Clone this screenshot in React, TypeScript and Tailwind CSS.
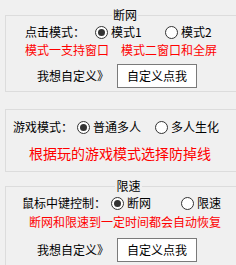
import React from "react";

// Small Win10-style radio button
function Radio({ checked, label, width }: { checked: boolean; label: string; width: string }) {
  return (
    <label className={`flex items-center ${width}`}>
      <span className="flex h-[13px] w-[13px] items-center justify-center rounded-full border border-[#333333] bg-white">
        {checked && <span className="h-[7px] w-[7px] rounded-full bg-[#333333]" />}
      </span>
      <span className="ml-[3px]">{label}</span>
    </label>
  );
}

function CustomRow({ pad }: { pad: string }) {
  return (
    <div className={`flex items-center ${pad}`}>
      <span className="w-[80px]">我想自定义》</span>
      <button className="flex h-[24px] w-[80px] items-center justify-center border border-[#7a7a7a] bg-white leading-[16px]">
        自定义点我
      </button>
    </div>
  );
}

export default function App() {
  return (
    <div
      className="h-[265px] w-[236px] overflow-hidden bg-[#f0f0f0] text-[12px] leading-[16px] text-black"
      style={{ fontFamily: '"Noto Sans CJK SC", "Noto Sans", sans-serif' }}
    >
      {/* 断网 */}
      <fieldset className="ml-[5px] mt-[7px] w-[240px] border border-[#dcdcdc] pb-[3px]">
        <legend className="mx-auto px-[1px] leading-[16px]">断网</legend>
        <div className="mt-[1px] flex h-[16px] items-center pl-[19px]">
          <span className="w-[70px]">点击模式：</span>
          <Radio checked label="模式1" width="w-[70px]" />
          <Radio checked={false} label="模式2" width="w-[70px]" />
        </div>
        <div className="mt-[2px] flex h-[16px] items-center pl-[19px] text-[#ff0000]">
          <span className="w-[96px]">模式一支持窗口</span>
          <span>模式二窗口和全屏</span>
        </div>
        <div className="mt-[6px]">
          <CustomRow pad="pl-[31px]" />
        </div>
      </fieldset>

      {/* 游戏模式 */}
      <div className="ml-[5px] mt-[17px] w-[240px] border border-[#dcdcdc] pb-[9px] pt-[9px]">
        <div className="flex h-[16px] items-center pl-[7px]">
          <span className="w-[64px]">游戏模式：</span>
          <Radio checked label="普通多人" width="w-[78px]" />
          <Radio checked={false} label="多人生化" width="w-[70px]" />
        </div>
        <div className="mt-[9px] pl-[23px] text-[14px] leading-[18px] text-[#ff0000]">
          根据玩的游戏模式选择防掉线
        </div>
      </div>

      {/* 限速 */}
      <fieldset className="ml-[5px] mt-[6px] w-[240px] border border-[#dcdcdc] pb-[4px]">
        <legend className="mx-auto px-[1px] leading-[16px]">限速</legend>
        <div className="mt-[1px] flex h-[16px] items-center pl-[16px]">
          <span className="w-[89px]">鼠标中键控制：</span>
          <Radio checked label="断网" width="w-[70px]" />
          <Radio checked={false} label="限速" width="w-[70px]" />
        </div>
        <div className="mt-[3px] h-[16px] pl-[23px] text-[#ff0000]">断网和限速到一定时间都会自动恢复</div>
        <div className="mt-[8px]">
          <CustomRow pad="pl-[31px]" />
        </div>
      </fieldset>
    </div>
  );
}
